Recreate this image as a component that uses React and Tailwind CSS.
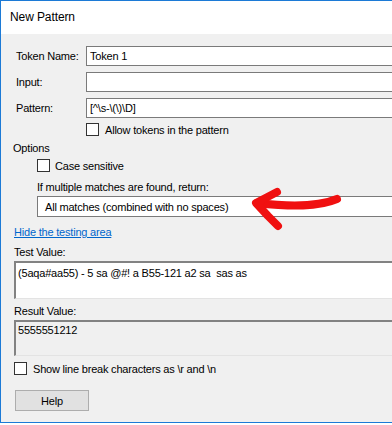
import React from "react";

function Box({ children, className = "" }) {
  return (
    <div className={`flex items-center h-[20px] bg-white border border-[#7a7a7a] border-r-0 pl-[3px] ${className}`}>
      {children}
    </div>
  );
}

function Check() {
  return <div className="w-[13px] h-[13px] shrink-0 bg-white border border-[#333333]" />;
}

export default function App() {
  return (
    <div className="w-[392px] h-[425px] overflow-hidden bg-white font-['Liberation_Sans',Arial,sans-serif] text-[11px] tracking-[-0.2px] text-black">
      <div className="relative w-[400px] h-[423px] flex flex-col border-l border-t border-b border-[#1c7ad6]">
        <div className="h-[33px] shrink-0 bg-white flex items-center pl-[9px] text-[12px] tracking-[-0.1px] pb-[2px]">New Pattern</div>
        <div className="flex-1 bg-[#f0f0f0] flex flex-col leading-[14px]">
          <div className="mt-[12px] flex items-center pl-[15px]">
            <div className="w-[70px]">Token Name:</div>
            <Box className="flex-1">Token 1</Box>
          </div>
          <div className="mt-[6px] flex items-center pl-[15px]">
            <div className="w-[70px]">Input:</div>
            <Box className="flex-1" />
          </div>
          <div className="mt-[6px] flex items-center pl-[15px]">
            <div className="w-[70px]">Pattern:</div>
            <Box className="flex-1">[^\s-\(\)\D]</Box>
          </div>
          <div className="mt-[5px] flex items-center h-[13px] pl-[85px] gap-[6px]">
            <Check />
            <span>Allow tokens in the pattern</span>
          </div>
          <div className="mt-[5px] h-[14px] pl-[12px]">Options</div>
          <div className="mt-[4px] flex items-center h-[13px] pl-[36px] gap-[5px]">
            <Check />
            <span>Case sensitive</span>
          </div>
          <div className="mt-[8px] h-[14px] pl-[36px]">If multiple matches are found, return:</div>
          <div className="mt-[2px] pl-[36px]">
            <div className="flex items-center h-[21px] bg-white border border-[#7a7a7a] border-r-0 pl-[7px]">
              All matches (combined with no spaces)
            </div>
          </div>
          <div className="mt-[8px] h-[14px] pl-[13px]">
            <span className="text-[#0066cc] underline">Hide the testing area</span>
          </div>
          <div className="mt-[6px] h-[14px] pl-[13px]">Test Value:</div>
          <div className="mt-[2px] pl-[13px]">
            <div className="h-[38px] bg-white border-t-2 border-l-2 border-b border-t-[#828282] border-l-[#828282] border-b-[#e3e3e3] pt-[3px] pl-[2px]">
              (5aqa#aa55) - 5 sa @#! a B55-121 a2 sa&nbsp; sas as
            </div>
          </div>
          <div className="mt-[5px] h-[14px] pl-[13px]">Result Value:</div>
          <div className="mt-[2px] pl-[13px]">
            <div className="h-[36px] bg-[#f0f0f0] border-t-2 border-l-2 border-b border-t-[#828282] border-l-[#828282] border-b-[#e3e3e3] pt-[1px] pl-[2px]">
              5555551212
            </div>
          </div>
          <div className="mt-[6px] flex items-center h-[13px] pl-[13px] gap-[6px]">
            <Check />
            <span>Show line break characters as \r and \n</span>
          </div>
          <div className="mt-[15px] pl-[14px]">
            <div className="w-[74px] h-[21px] flex items-center justify-center bg-[#e1e1e1] border border-[#adadad]">Help</div>
          </div>
        </div>
        <svg className="absolute left-0 top-0 pointer-events-none" width="400" height="425" viewBox="0 0 400 425">
          <g transform="translate(-1,-1)" fill="none" stroke="#f01010" strokeWidth="8" strokeLinecap="round" strokeLinejoin="round">
            <path d="M337,199 C318,207 292,207 257,203" />
            <path d="M277,192 L256,203 L268,216 L278,226" />
          </g>
        </svg>
      </div>
    </div>
  );
}
